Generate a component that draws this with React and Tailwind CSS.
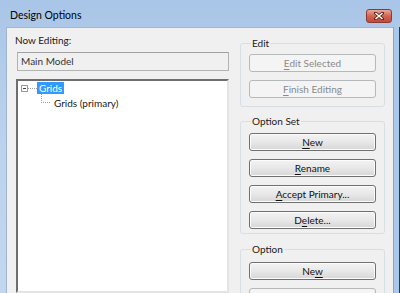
import React from "react";

const font = { fontFamily: 'Lato, "Open Sans", sans-serif' };

// Letter with the mnemonic underline
const U = ({ children }) => <span className="underline underline-offset-2">{children}</span>;

const WinButton = ({ children, disabled }) => (
  <button
    disabled={disabled}
    className={
      disabled
        ? "w-[127px] h-[18px] shrink-0 rounded-[3px] border border-[#b5b9bc] bg-[#f4f4f4] text-[10px] leading-none text-[#8a8a8a]"
        : "w-[127px] h-[18px] shrink-0 rounded-[3px] border border-[#707070] bg-gradient-to-b from-[#f3f3f3] via-[#e8e8e8] to-[#d6d6d6] text-[10px] leading-none text-[#111] shadow-[inset_0_0_0_1px_#fcfcfc]"
    }
  >
    {children}
  </button>
);

const GroupBox = ({ title, children, className = "" }) => (
  <fieldset
    className={`border border-[#d5dfe5] rounded-[3px] px-[8px] ${className}`}
  >
    <legend className="ml-[2px] px-[1px] text-[10px] leading-[12px] text-[#1a1a1a]">
      {title}
    </legend>
    <div className="flex flex-col gap-[8px]">{children}</div>
  </fieldset>
);

const App = () => {
  return (
    <div
      style={font}
      className="w-[400px] h-[293px] overflow-hidden flex flex-col bg-gradient-to-b from-[#a9c5e7] via-[#bcd3ee] to-[#c2d7ef]"
    >
      {/* Title bar */}
      <div className="h-[27px] shrink-0 flex items-start justify-between pl-[10px] pr-[8px] pt-[9px]">
        <span className="text-[10.5px] leading-[13px] text-black">Design Options</span>
        <div className="w-[26px] h-[14px] rounded-[3px] border border-[#8a3b35] bg-gradient-to-b from-[#e8a89b] via-[#d2634f] to-[#c44a36] flex items-center justify-center">
          <svg width="10" height="8" viewBox="0 0 10 8">
            <path d="M1.5 1 L8.5 7 M8.5 1 L1.5 7" stroke="#5a2018" strokeWidth="3" strokeLinecap="square" />
            <path d="M1.5 1 L8.5 7 M8.5 1 L1.5 7" stroke="#ffffff" strokeWidth="1.6" />
          </svg>
        </div>
      </div>

      <div className="flex flex-1 min-h-0">
        {/* left frame */}
        <div className="w-[7px] shrink-0 border-r border-[#9fb5cf]" />

        {/* Content */}
        <div className="flex-1 bg-[#f0f0f0] flex pl-[9px] pt-[6px] border-t border-[#a3b6cc]">
          <div className="w-[213px] flex flex-col">
            <div className="text-[10px] leading-[12px] text-[#1a1a1a] -ml-[1px]">Now Editing:</div>
            <div className="mt-[6px] ml-[1px] h-[19px] shrink-0 border border-[#b3b3b3] border-t-[#a0a0a0] bg-[#f0f0f0] px-[3px] flex items-center text-[10px] text-[#333]">
              Main Model
            </div>
            <div className="mt-[8px] flex-1 bg-white border-2 border-t-[#6e6e6e] border-l-[#6e6e6e] border-r-[#e4e4e4] border-b-[#e4e4e4] pt-[1px]">
              <div className="flex items-center h-[12px]">
                <div className="ml-[3px] w-[7px] h-[7px] border border-[#9a9a9a] bg-white flex items-center justify-center">
                  <div className="w-[3px] h-[1px] bg-[#444]" />
                </div>
                <div className="w-[9px] border-t border-dotted border-[#a0a0a0]" />
                <span className="bg-[#3399ff] text-white text-[10px] leading-[12px] px-[2px]">Grids</span>
              </div>
              <div className="flex items-start h-[14px]">
                <div className="ml-[23px] w-[9px] h-[9px] border-l border-b border-dotted border-[#a0a0a0]" />
                <span className="ml-[4px] mt-[3px] text-[10px] leading-[12px] text-[#1a1a1a]">Grids (primary)</span>
              </div>
            </div>
          </div>

          <div className="ml-[11px] w-[144px] flex flex-col gap-[8px] mt-[3px]">
            <GroupBox title="Edit" className="pt-[5px] pb-[8px]">
              <WinButton disabled>
                <U>E</U>dit Selected
              </WinButton>
              <WinButton disabled>
                <U>F</U>inish Editing
              </WinButton>
            </GroupBox>
            <GroupBox title="Option Set" className="pt-[6px] pb-[4px]">
              <WinButton>
                <U>N</U>ew
              </WinButton>
              <WinButton>
                <U>R</U>ename
              </WinButton>
              <WinButton>
                <U>A</U>ccept Primary...
              </WinButton>
              <WinButton>
                D<U>e</U>lete...
              </WinButton>
            </GroupBox>
            <GroupBox title="Option" className="mt-[1px] pt-[7px] pb-[6px]">
              <WinButton>
                Ne<U>w</U>
              </WinButton>
              <WinButton disabled>
                <U>M</U>ake Primary
              </WinButton>
            </GroupBox>
          </div>
        </div>

        {/* right frame */}
        <div className="w-[7px] shrink-0 bg-[#a9c8ea] border-l border-[#8aa6c6] border-r border-r-[#1f3c5a]" />
      </div>
    </div>
  );
};

export default App;
